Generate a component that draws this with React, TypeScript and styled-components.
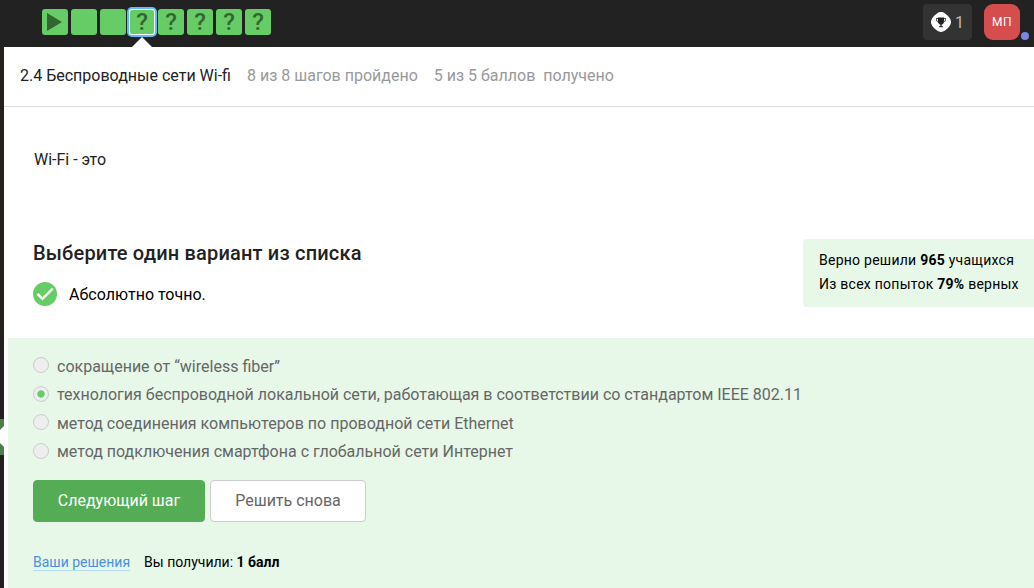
import React from 'react';
import styled, { createGlobalStyle } from 'styled-components';

const Global = createGlobalStyle`
  * { box-sizing: border-box; }
  body { margin: 0; background: #fff; overflow: hidden; font-family: Roboto, "Liberation Sans", sans-serif; }
`;

const Page = styled.div`
  width: 1034px;
  height: 588px;
  display: flex;
  flex-direction: column;
  overflow: hidden;
  color: #222;
  font-size: 16px;
`;

const TopBar = styled.header`
  height: 47px;
  flex: none;
  display: flex;
  align-items: flex-start;
  justify-content: space-between;
  background: #222;
  padding-left: 42px;
`;

const Steps = styled.nav`
  display: flex;
  gap: 3px;
  padding-top: 9px;
`;

const Step = styled.div<{ $active?: boolean }>`
  position: relative;
  width: 26px;
  height: 26px;
  border-radius: 3px;
  background: #66cc66;
  color: #336633;
  display: flex;
  align-items: center;
  justify-content: center;
  ${p => p.$active && `
    box-shadow: inset 0 0 0 1px #fff, 0 0 0 2px #5fbcf7;
  `}
`;

const QuestionMark = styled.span`
  font-size: 24px;
  font-weight: 500;
  line-height: 26px;
`;

const Pointer = styled.svg`
  position: absolute;
  left: 3px;
  top: 28px;
`;

const UserArea = styled.div`
  display: flex;
  padding: 4px 14px 0 0;
  gap: 12px;
`;

const Score = styled.div`
  width: 49px;
  height: 36px;
  border-radius: 4px;
  background: #333;
  color: #bbb;
  display: flex;
  align-items: center;
  padding-left: 8px;
  gap: 4px;
`;

const Avatar = styled.div`
  position: relative;
  width: 36px;
  height: 36px;
  border-radius: 9px;
  background: #d64d4d;
  color: #fff;
  font-size: 12px;
  letter-spacing: 0.6px;
  display: flex;
  align-items: center;
  justify-content: center;
`;

const Dot = styled.span`
  position: absolute;
  left: 37px;
  top: 28px;
  width: 8px;
  height: 8px;
  border-radius: 50%;
  background: #7b86e2;
`;

const Body = styled.div`
  flex: 1;
  display: flex;
  min-height: 0;
`;

const Rail = styled.aside`
  width: 4px;
  flex: none;
  background: #24201e;
  padding-top: 372px;
`;

const RailMark = styled.svg`
  display: block;
`;

const Content = styled.main`
  flex: 1;
  min-width: 0;
  display: flex;
  flex-direction: column;
`;

const LessonBar = styled.div`
  height: 60px;
  flex: none;
  border-bottom: 1px solid #ddd;
  padding: 17px 0 0 16px;
  display: flex;
  line-height: 24px;
  white-space: pre;
`;

const Progress = styled.span<{ $gap: number }>`
  color: #999;
  margin-left: ${p => p.$gap}px;
`;

const Question = styled.p`
  margin: 0;
  padding: 41px 0 0 30px;
  height: 132px;
  line-height: 24px;
`;

const Task = styled.section`
  display: flex;
  justify-content: space-between;
  height: 99px;
  padding-left: 29px;
  flex: none;
`;

const Heading = styled.h2`
  margin: 0;
  font-size: 20px;
  font-weight: 500;
  line-height: 28px;
  letter-spacing: 0.18px;
`;

const Feedback = styled.div`
  display: flex;
  gap: 12px;
  align-items: flex-start;
  margin-top: 15px;
  line-height: 26px;
  color: #000;
`;

const Stats = styled.div`
  width: 231px;
  height: 68px;
  border-radius: 4px 0 0 4px;
  background: #e7f8e8;
  color: #000;
  font-size: 14px;
  line-height: 24px;
  padding: 9px 0 0 16px;
  white-space: nowrap;
  letter-spacing: 0.25px;
`;

const AnswerPanel = styled.section`
  flex: 1;
  margin-left: 4px;
  background: #e7f8e8;
  padding: 13px 0 0 25px;
`;

const Option = styled.div`
  display: flex;
  align-items: center;
  height: 28.5px;
  gap: 8px;
  color: #666;
  white-space: nowrap;
`;

const Radio = styled.span<{ $checked?: boolean }>`
  width: 16px;
  height: 16px;
  border-radius: 50%;
  border: 1px solid #ccc;
  background: ${p => (p.$checked ? 'radial-gradient(circle, #66cc66 0 3.3px, #eee 4px)' : '#eee')};
`;

const OptionText = styled.span`
  padding-top: 2px;
`;

const Actions = styled.div`
  display: flex;
  gap: 5px;
  margin-top: 15px;
`;

const Button = styled.button<{ $primary?: boolean }>`
  width: ${p => (p.$primary ? 172 : 156)}px;
  height: 42px;
  padding: 0 0 2px;
  border-radius: 4px;
  border: 1px solid ${p => (p.$primary ? '#54ad54' : '#ccc')};
  background: ${p => (p.$primary ? '#54ad54' : '#fff')};
  color: ${p => (p.$primary ? '#fff' : '#666')};
  font: 16px Roboto, sans-serif;
`;

const Results = styled.div`
  display: flex;
  gap: 14px;
  margin-top: 32px;
  font-size: 14px;
  line-height: 17px;
  color: #000;
`;

const SolutionsLink = styled.a`
  height: 17px;
  color: #4a90e2;
  border-bottom: 1px solid #b2dcf7;
`;

const PlayIcon = () => (
  <svg width="26" height="26" viewBox="0 0 26 26">
    <path d="M5 4v18l15-9z" fill="currentColor" />
  </svg>
);

const TrophyIcon = () => (
  <svg width="20" height="20" viewBox="0 0 20 20">
    <path d="M10 0c1.500 0 2.700.5 4 1.400 1.700 1.200 3.400 2.900 4.600 4.600.9 1.300 1.400 2.500 1.400 4s-.5 2.700-1.400 4c-1.200 1.700-2.900 3.400-4.600 4.600-1.300.9-2.500 1.400-4 1.400s-2.700-.5-4-1.400C4.300 17.400 2.600 15.700 1.400 14 .5 12.700 0 11.500 0 10s.5-2.700 1.400-4C2.600 4.300 4.300 2.600 6 1.400 7.300.5 8.500 0 10 0z" fill="#fff" />
    <path d="M7 5.500h6v3.300c0 2.300-.9 3.500-2.400 3.900v1.500H12v1H8v-1h1.400v-1.500C7.900 12.300 7 11.100 7 8.800z" fill="#222" />
    <path d="M7 6.400H5.500c0 2 .4 3.500 2.200 4.100M13 6.400h1.500c0 2-.4 3.500-2.200 4.100" fill="none" stroke="#222" strokeWidth="0.9" />
  </svg>
);

const steps = ['play', 'text', 'text', 'active', 'quiz', 'quiz', 'quiz', 'quiz'];

const options = [
  'сокращение от “wireless fiber”',
  'технология беспроводной локальной сети, работающая в соответствии со стандартом IEEE 802.11',
  'метод соединения компьютеров по проводной сети Ethernet',
  'метод подключения смартфона с глобальной сети Интернет',
];

export default function App() {
  return (
    <Page>
      <Global />
      <TopBar>
        <Steps>
          {steps.map((kind, i) => (
            <Step key={i} $active={kind === 'active'}>
              {kind === 'play' && <PlayIcon />}
              {(kind === 'quiz' || kind === 'active') && <QuestionMark>?</QuestionMark>}
              {kind === 'active' && (
                <Pointer width="20" height="10" viewBox="0 0 20 10">
                  <path d="M0 10L10 0l10 10z" fill="#fff" />
                </Pointer>
              )}
            </Step>
          ))}
        </Steps>
        <UserArea>
          <Score><TrophyIcon /><span>1</span></Score>
          <Avatar>МП<Dot /></Avatar>
        </UserArea>
      </TopBar>
      <Body>
        <Rail>
          <RailMark width="4" height="36" viewBox="0 0 4 36">
            <path d="M0 0h4v36H0z" fill="#488048" />
            <path d="M4 7v21L0 24V11z" fill="#fff" />
          </RailMark>
        </Rail>
        <Content>
          <LessonBar>
            <span>2.4 Беспроводные сети Wi-fi</span>
            <Progress $gap={16}>8 из 8 шагов пройдено</Progress>
            <Progress $gap={16}>{'5 из 5 баллов  получено'}</Progress>
          </LessonBar>
          <Question>Wi-Fi - это</Question>
          <Task>
            <div>
              <Heading>Выберите один вариант из списка</Heading>
              <Feedback>
                <svg width="24" height="24" viewBox="0 0 24 24">
                  <circle cx="12" cy="12" r="12" fill="#66cc66" />
                  <path d="M4.500 11.800l5 5L19.700 6.600" fill="none" stroke="#fff" strokeWidth="2.400" />
                </svg>
                <span>Абсолютно точно.</span>
              </Feedback>
            </div>
            <Stats>
              <div>Верно решили <b>965</b> учащихся</div>
              <div>Из всех попыток <b>79%</b> верных</div>
            </Stats>
          </Task>
          <AnswerPanel>
            {options.map((text, i) => (
              <Option key={text}>
                <Radio $checked={i === 1} />
                <OptionText>{text}</OptionText>
              </Option>
            ))}
            <Actions>
              <Button $primary>Следующий шаг</Button>
              <Button>Решить снова</Button>
            </Actions>
            <Results>
              <SolutionsLink>Ваши решения</SolutionsLink>
              <span>Вы получили: <b>1 балл</b></span>
            </Results>
          </AnswerPanel>
        </Content>
      </Body>
    </Page>
  );
}
